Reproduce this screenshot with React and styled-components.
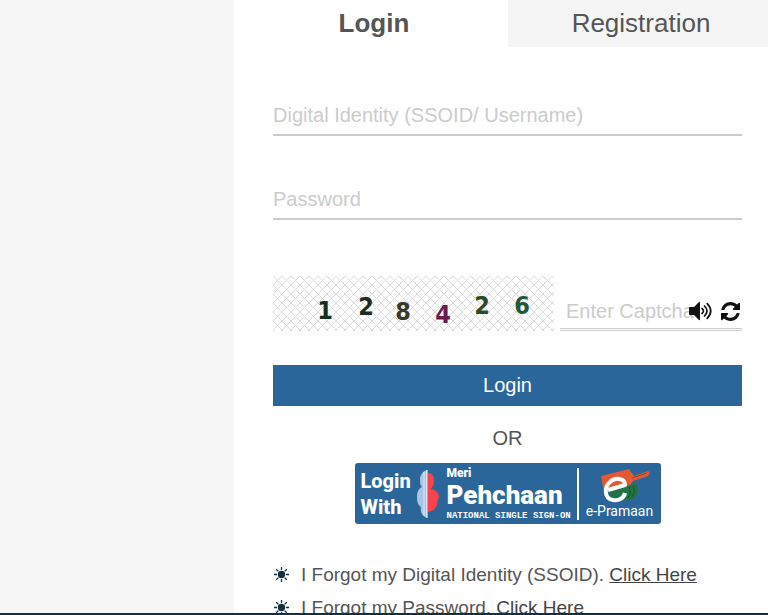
import React, { useState } from "react";
import styled, { createGlobalStyle } from "styled-components";

const GlobalStyle = createGlobalStyle`
  * {
    box-sizing: border-box;
  }
  body {
    margin: 0;
    color: #555;
    background-color: #fff;
    font-family: "Liberation Sans", Arial, sans-serif;
  }
  button,
  input {
    font-family: inherit;
  }
`;

// layout
const StPage = styled.div`
  display: flex;
  height: 100vh;
  overflow: hidden;
  border-bottom: 2px solid #12303f;
`;

const StAside = styled.aside`
  flex: 0 0 234px;
  background-color: #f6f6f6;
`;

const StPanel = styled.main`
  flex: 1;
  min-width: 0;
`;

// tabs
const StTabs = styled.div`
  display: grid;
  grid-template-columns: minmax(0, 274px) 1fr;
`;

const StTab = styled.button`
  height: 47px;
  padding: 0 0 1px 6px;
  border: none;
  color: #555;
  font-size: 26px;
  font-weight: ${({ $active }) => ($active ? 700 : 400)};
  background-color: ${({ $active }) => ($active ? "#fff" : "#f5f5f5")};
  cursor: pointer;
`;

// form
const StForm = styled.form`
  display: flex;
  flex-direction: column;
  padding: 47px 26px 0 39px;
`;

const StInput = styled.input`
  width: 100%;
  height: 42px;
  margin-bottom: 42px;
  padding: 2px 0 0;
  border: none;
  border-bottom: 2px solid #ccc;
  outline: none;
  color: #555;
  font-size: 20px;
  background-color: transparent;
  &::placeholder {
    color: #ccc;
    opacity: 1;
  }
`;

const StCaptchaRow = styled.div`
  display: flex;
  align-items: flex-end;
  gap: 6px;
  margin: 14px 0 34px;
`;

const StCaptchaField = styled.div`
  position: relative;
  flex: 1;
  min-width: 0;
`;

const StCaptchaInput = styled(StInput)`
  display: block;
  height: 38px;
  margin: 0;
  padding-left: 6px;
  border-bottom: 3px double #ccc;
`;

const StCaptchaTools = styled.div`
  position: absolute;
  right: 2px;
  top: 8px;
  display: flex;
  align-items: center;
  gap: 9px;
`;

const StIconBtn = styled.button`
  display: flex;
  padding: 0;
  border: none;
  color: #111;
  background-color: transparent;
  cursor: pointer;
`;

const StLoginBtn = styled.button`
  height: 41px;
  border: none;
  color: #fff;
  font-size: 20px;
  background-color: #2a6699;
  cursor: pointer;
`;

const StOr = styled.p`
  margin: 20px 0 12px;
  font-size: 20px;
  line-height: 25px;
  text-align: center;
`;

// sso button
const StSso = styled.button`
  display: flex;
  align-items: center;
  align-self: center;
  width: 306px;
  height: 61px;
  padding: 0 6px;
  border: none;
  border-radius: 3px;
  color: #fff;
  font-family: Roboto, sans-serif;
  text-align: left;
  background-color: #2a6699;
  cursor: pointer;
`;

const StSsoWith = styled.span`
  width: 50px;
  margin-right: 6px;
  font-size: 20px;
  font-weight: 800;
  line-height: 26px;
`;

const StSsoBrand = styled.span`
  display: flex;
  flex-direction: column;
  flex: 1;
  min-width: 0;
  margin-left: 8px;
  font-weight: 900;
  white-space: nowrap;
`;

const StMeri = styled.span`
  font-size: 12px;
  line-height: 14px;
`;

const StPehchaan = styled.span`
  font-size: 26px;
  line-height: 31px;
`;

const StTagline = styled.span`
  font-family: "Liberation Mono", monospace;
  font-size: 9px;
  font-weight: 700;
  line-height: 10px;
`;

const StPramaan = styled.span`
  display: flex;
  flex-direction: column;
  align-items: center;
  width: 78px;
  padding-left: 6px;
  border-left: 2px solid #fff;
  font-size: 14px;
  line-height: 17px;
`;

// help links
const StHelp = styled.ul`
  margin: 34px 0 0;
  padding: 0 26px 0 40px;
  list-style: none;
`;

const StHelpItem = styled.li`
  display: flex;
  align-items: center;
  gap: 12px;
  font-size: 19px;
  line-height: 33px;
  white-space: nowrap;
`;

const StLink = styled.a`
  color: #444;
  text-decoration: underline;
`;

const digits = [
  { value: "1", x: 52, y: 43, color: "#14301c" },
  { value: "2", x: 93, y: 39, color: "#222b1a" },
  { value: "8", x: 130, y: 44, color: "#3a3a2c" },
  { value: "4", x: 170, y: 47, color: "#6a1a4c" },
  { value: "2", x: 209, y: 38, color: "#2c4a24" },
  { value: "6", x: 249, y: 38, color: "#22583a" },
];

function CaptchaImage() {
  return (
    <svg width="281" height="55" role="img" aria-label="Captcha">
      <defs>
        <pattern id="hatch" width="9" height="9" patternUnits="userSpaceOnUse">
          <path d="M-1 -1L10 10M10 -1L-1 10" stroke="#dadada" strokeWidth="1" />
        </pattern>
      </defs>
      <rect width="281" height="55" fill="url(#hatch)" />
      <g
        fontFamily="'DejaVu Sans Condensed', 'DejaVu Sans', sans-serif"
        fontSize="25"
        fontWeight="700"
        textAnchor="middle"
      >
        {digits.map((d) => (
          <text key={d.x} x={d.x} y={d.y} fill={d.color}>
            {d.value}
          </text>
        ))}
      </g>
    </svg>
  );
}

function VolumeIcon() {
  return (
    <svg width="23" height="20" viewBox="0 0 23 20" aria-hidden="true">
      <path
        d="M1 6h4l5-5q1-1 1 1v16q0 2-1 1l-5-5H1q-1 0-1-1V7q0-1 1-1z"
        fill="currentColor"
      />
      <path
        d="M13 7.5q3 2.5 0 5M15.5 5q5 5 0 10M18.2 2.7q7 7.300 0 14.600"
        fill="none"
        stroke="currentColor"
        strokeWidth="1.7"
        strokeLinecap="round"
      />
    </svg>
  );
}

function RefreshIcon() {
  return (
    <svg width="19" height="19" viewBox="0 0 1536 1536" aria-hidden="true">
      <path
        d="M1511 928q0 5-1 7-64 268-268 434.500t-478 166.500q-146 0-282.500-55t-243.500-157l-129 129q-19 19-45 19t-45-19-19-45v-448q0-26 19-45t45-19h448q26 0 45 19t19 45-19 45l-137 137q71 66 161 102t187 36q134 0 250-65t186-179q11-17 53-117 8-23 30-23h192q13 0 22.500 9.500t9.500 22.500zm25-800v448q0 26-19 45t-45 19h-448q-26 0-45-19t-19-45 19-45l138-138q-148-137-349-137-134 0-250 65t-186 179q-11 17-53 117-8 23-30 23h-199q-13 0-22.500-9.500t-9.500-22.500v-7q65-268 270-434.500t480-166.500q146 0 284 55.500t245 156.500l130-129q19-19 45-19t45 19 19 45z"
        fill="currentColor"
      />
    </svg>
  );
}

function PersonMark() {
  return (
    <svg width="22" height="50" viewBox="0 0 22 50" aria-hidden="true">
      <path
        d="M10 1C6 2 3 6 3 10c0 4 0 6 2 8-4 2-5 6-5 10 0 5 1 8 4 10-1 5 1 9 6 11z"
        fill="#a9c5e3"
      />
      <path d="M7 3v44" stroke="#dce9f5" strokeWidth="1" />
      <path
        d="M11 4c4 0 6 3 6 7 0 4-1 7-3 9 5 1 8 4 8 8-1 3-2 4-2 7-1 5-4 7-9 8z"
        fill="#f9434b"
      />
      <path d="M10 1v48" stroke="#fff" strokeWidth="1" />
    </svg>
  );
}

function PramaanMark() {
  return (
    <svg width="60" height="35" viewBox="0 0 60 35" aria-hidden="true">
      <path d="M11 8l28-7 5 7 14-5 2 2-2 3-15 5-5 7-24 4z" fill="#e35a32" />
      <path d="M42 10l15-5" stroke="#8f3f3c" strokeWidth="1" />
      <path d="M19 24l15-5 13-4 1 11-5 6-24 1z" fill="#217345" />
      <path
        d="M39 19q3 5-1 11M43 18q3 5-1 11"
        stroke="#13542f"
        fill="none"
      />
      <path
        d="M18 22l17-5c0-7-10-8-15-3-6 5-6 17 3 18 6 1 11-2 12-7"
        fill="none"
        stroke="#fff"
        strokeWidth="4"
        strokeLinejoin="round"
      />
    </svg>
  );
}

function SunIcon() {
  return (
    <svg width="15" height="15" viewBox="0 0 15 15" aria-hidden="true">
      <circle cx="7.5" cy="7.5" r="3.7" fill="#12303f" />
      <path
        d="M7.5 0v3M7.5 12v3M0 7.5h3M12 7.5h3M2.2 2.2l2.2 2.2M10.6 10.6l2.2 2.2M2.2 12.8l2.2-2.2M10.6 4.4l2.2-2.2"
        stroke="#12303f"
        strokeWidth="1.3"
      />
    </svg>
  );
}

function App() {
  const [tab, setTab] = useState("login");

  const handleSubmit = (e) => {
    e.preventDefault();
  };

  return (
    <>
      <GlobalStyle />
      <StPage>
        <StAside />
        <StPanel>
          <StTabs role="tablist">
            <StTab
              role="tab"
              aria-selected={tab === "login"}
              $active={tab === "login"}
              onClick={() => setTab("login")}
            >
              Login
            </StTab>
            <StTab
              role="tab"
              aria-selected={tab === "registration"}
              $active={tab === "registration"}
              onClick={() => setTab("registration")}
            >
              Registration
            </StTab>
          </StTabs>
          <StForm onSubmit={handleSubmit}>
            <StInput
              aria-label="Digital Identity (SSOID/ Username)"
              placeholder="Digital Identity (SSOID/ Username)"
            />
            <StInput
              type="password"
              aria-label="Password"
              placeholder="Password"
            />
            <StCaptchaRow>
              <CaptchaImage />
              <StCaptchaField>
                <StCaptchaInput
                  aria-label="Enter Captcha"
                  placeholder="Enter Captcha"
                />
                <StCaptchaTools>
                  <StIconBtn type="button" aria-label="Play captcha">
                    <VolumeIcon />
                  </StIconBtn>
                  <StIconBtn type="button" aria-label="Refresh captcha">
                    <RefreshIcon />
                  </StIconBtn>
                </StCaptchaTools>
              </StCaptchaField>
            </StCaptchaRow>
            <StLoginBtn type="submit">Login</StLoginBtn>
            <StOr>OR</StOr>
            <StSso type="button">
              <StSsoWith>
                Login
                <br />
                With
              </StSsoWith>
              <PersonMark />
              <StSsoBrand>
                <StMeri>Meri</StMeri>
                <StPehchaan>Pehchaan</StPehchaan>
                <StTagline>NATIONAL SINGLE SIGN-ON</StTagline>
              </StSsoBrand>
              <StPramaan>
                <PramaanMark />
                e-Pramaan
              </StPramaan>
            </StSso>
          </StForm>
          <StHelp>
            <StHelpItem>
              <SunIcon />
              <span>
                I Forgot my Digital Identity (SSOID).{" "}
                <StLink href="#ssoid">Click Here</StLink>
              </span>
            </StHelpItem>
            <StHelpItem>
              <SunIcon />
              <span>
                I Forgot my Password. <StLink href="#password">Click Here</StLink>
              </span>
            </StHelpItem>
          </StHelp>
        </StPanel>
      </StPage>
    </>
  );
}

export default App;
